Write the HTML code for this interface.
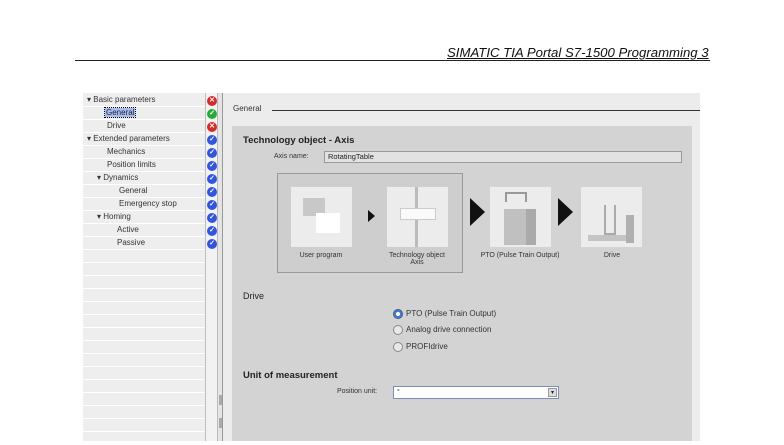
<!DOCTYPE html>
<html><head><meta charset="utf-8"><style>
*{margin:0;padding:0;box-sizing:border-box}
body{width:784px;height:441px;background:#fff;position:relative;overflow:hidden;font-family:"Liberation Sans",sans-serif;font-size:8px;color:#222}
.a{position:absolute}
.row{position:absolute;left:83px;width:122px;height:13px;border-bottom:1px solid #fff;line-height:12px;font-size:8px;color:#333}
.ic{position:absolute;left:207px;width:10px;height:10px;border-radius:50%;color:#fff;font-size:7px;line-height:10px;text-align:center;font-weight:bold}
.r{background:#d42a2a}.g{background:#2aa83a}.b{background:#3355dd}
.tile{position:absolute;width:61px;height:60px;background:#ececec}
.cap{position:absolute;font-size:7px;color:#333;text-align:center;width:90px}
.rad{position:absolute;left:393px;width:10px;height:10px;border-radius:50%;border:1px solid #888;background:#e8e8e8}
.rl{position:absolute;left:406px;font-size:8px;color:#333}
</style></head><body>
<div class="a" style="left:447px;top:45px;font-size:13.2px;font-style:italic;text-decoration:underline;color:#111;white-space:nowrap">SIMATIC TIA Portal S7-1500 Programming 3</div>
<div class="a" style="left:75px;top:60px;width:635px;height:1px;background:#222"></div>

<div class="a" style="left:83px;top:93px;width:122px;height:348px;background:#eeeeee"></div>
<div class="a" style="left:205px;top:93px;width:13px;height:348px;background:#f2f2f2;border-left:1px solid #bbb;border-right:1px solid #bbb"></div>
<div class="a" style="left:218px;top:93px;width:5px;height:348px;background:#e4e4e4;border-right:1px solid #999"></div>
<div class="a" style="left:219px;top:395px;width:3px;height:10px;background:#aaa"></div>
<div class="a" style="left:219px;top:418px;width:3px;height:10px;background:#aaa"></div>

<div class="row" style="top:94px;padding-left:4px">▾ Basic parameters</div>
<div class="row" style="top:107px;padding-left:22px"><span style="background:#a8bcf0;color:#223;outline:1px dotted #000;padding:0 1px">General</span></div>
<div class="row" style="top:120px;padding-left:24px">Drive</div>
<div class="row" style="top:133px;padding-left:4px">▾ Extended parameters</div>
<div class="row" style="top:146px;padding-left:24px">Mechanics</div>
<div class="row" style="top:159px;padding-left:24px">Position limits</div>
<div class="row" style="top:172px;padding-left:14px">▾ Dynamics</div>
<div class="row" style="top:185px;padding-left:36px">General</div>
<div class="row" style="top:198px;padding-left:36px">Emergency stop</div>
<div class="row" style="top:211px;padding-left:14px">▾ Homing</div>
<div class="row" style="top:224px;padding-left:34px">Active</div>
<div class="row" style="top:237px;padding-left:34px">Passive</div>
<div class="row" style="top:250px"></div><div class="row" style="top:263px"></div><div class="row" style="top:276px"></div><div class="row" style="top:289px"></div><div class="row" style="top:302px"></div><div class="row" style="top:315px"></div><div class="row" style="top:328px"></div><div class="row" style="top:341px"></div><div class="row" style="top:354px"></div><div class="row" style="top:367px"></div><div class="row" style="top:380px"></div><div class="row" style="top:393px"></div><div class="row" style="top:406px"></div><div class="row" style="top:419px"></div><div class="row" style="top:432px"></div>

<div class="ic r" style="top:96px">✕</div>
<div class="ic g" style="top:109px">✓</div>
<div class="ic r" style="top:122px">✕</div>
<div class="ic b" style="top:135px">✓</div>
<div class="ic b" style="top:148px">✓</div>
<div class="ic b" style="top:161px">✓</div>
<div class="ic b" style="top:174px">✓</div>
<div class="ic b" style="top:187px">✓</div>
<div class="ic b" style="top:200px">✓</div>
<div class="ic b" style="top:213px">✓</div>
<div class="ic b" style="top:226px">✓</div>
<div class="ic b" style="top:239px">✓</div>

<div class="a" style="left:223px;top:93px;width:477px;height:348px;background:#ececec"></div>
<div class="a" style="left:233px;top:104px;font-size:8px;color:#333">General</div>
<div class="a" style="left:272px;top:110px;width:428px;height:1px;background:#333"></div>
<div class="a" style="left:232px;top:126px;width:460px;height:315px;background:#d3d3d3"></div>
<div class="a" style="left:243px;top:135px;font-size:9.5px;font-weight:bold;color:#222">Technology object - Axis</div>
<div class="a" style="left:274px;top:153px;font-size:7px;color:#333">Axis name:</div>
<div class="a" style="left:324px;top:151px;width:358px;height:12px;background:#e2e2e2;border:1px solid #999;font-size:7.5px;line-height:10px;padding-left:3px">RotatingTable</div>

<div class="a" style="left:277px;top:173px;width:186px;height:100px;border:1px solid #999;background:#cecece"></div>
<div class="tile" style="left:291px;top:187px"></div>
<div class="a" style="left:303px;top:198px;width:22px;height:18px;background:#c8c8c8"></div>
<div class="a" style="left:316px;top:213px;width:24px;height:20px;background:#fff"></div>
<div class="tile" style="left:387px;top:187px"></div>
<div class="a" style="left:415px;top:187px;width:3px;height:60px;background:#bbb"></div>
<div class="a" style="left:400px;top:208px;width:36px;height:12px;background:#fafafa;border:1px solid #ccc"></div>
<div class="a" style="left:368px;top:210px;width:0;height:0;border-top:6px solid transparent;border-bottom:6px solid transparent;border-left:7px solid #111"></div>
<div class="a" style="left:470px;top:198px;width:0;height:0;border-top:14px solid transparent;border-bottom:14px solid transparent;border-left:15px solid #111"></div>
<div class="a" style="left:558px;top:198px;width:0;height:0;border-top:14px solid transparent;border-bottom:14px solid transparent;border-left:15px solid #111"></div>
<div class="tile" style="left:490px;top:187px"></div>
<div class="a" style="left:505px;top:192px;width:22px;height:10px;border:2px solid #999;border-bottom:none"></div>
<div class="a" style="left:504px;top:209px;width:26px;height:36px;background:#c0c0c0"></div>
<div class="a" style="left:526px;top:209px;width:10px;height:36px;background:#aaa"></div>
<div class="tile" style="left:581px;top:187px"></div>
<div class="a" style="left:604px;top:205px;width:12px;height:30px;border:2px solid #aaa;border-top:none"></div>
<div class="a" style="left:588px;top:235px;width:38px;height:6px;background:#c4c4c4"></div>
<div class="a" style="left:626px;top:215px;width:8px;height:28px;background:#b0b0b0"></div>
<div class="cap" style="left:276px;top:252px">User program</div>
<div class="cap" style="left:372px;top:252px">Technology object<br>Axis</div>
<div class="cap" style="left:470px;top:252px;width:100px">PTO (Pulse Train Output)</div>
<div class="cap" style="left:567px;top:252px">Drive</div>

<div class="a" style="left:243px;top:291px;font-size:9px;color:#222">Drive</div>
<div class="rad" style="top:309px;background:#3a7fd8;border-color:#557"></div>
<div class="a" style="left:396px;top:312px;width:4px;height:4px;border-radius:50%;background:#fff"></div>
<div class="rl" style="top:309px">PTO (Pulse Train Output)</div>
<div class="rad" style="top:325px"></div>
<div class="rl" style="top:325px">Analog drive connection</div>
<div class="rad" style="top:342px"></div>
<div class="rl" style="top:342px">PROFIdrive</div>

<div class="a" style="left:243px;top:370px;font-size:9.5px;font-weight:bold;color:#222">Unit of measurement</div>
<div class="a" style="left:337px;top:388px;font-size:7px;color:#333">Position unit:</div>
<div class="a" style="left:393px;top:386px;width:166px;height:13px;background:#fff;border:1px solid #7a8fb8;font-size:7px;line-height:11px;padding-left:3px">°</div>
<div class="a" style="left:548px;top:388px;width:9px;height:9px;background:#ddd;border:1px solid #999;font-size:6px;line-height:8px;text-align:center">▾</div>
</body></html>
